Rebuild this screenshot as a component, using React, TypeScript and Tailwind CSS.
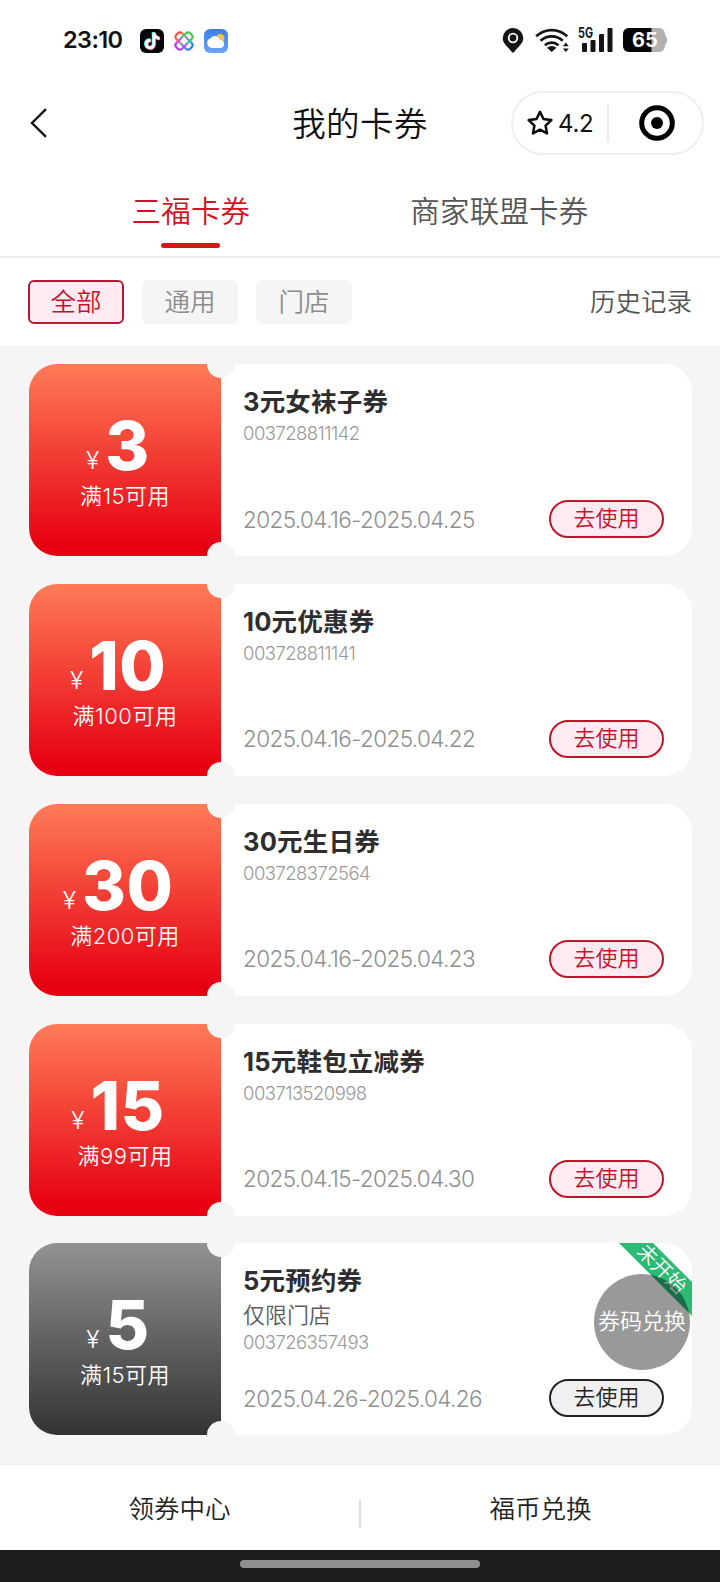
import { useState } from "react";
import clsx from "clsx";

interface Coupon {
  amount: string;
  condition: string;
  title: string;
  scope?: string;
  code: string;
  period: string;
  pending?: boolean;
}

const coupons: Coupon[] = [
  {
    amount: "3",
    condition: "满15可用",
    title: "3元女袜子券",
    code: "003728811142",
    period: "2025.04.16-2025.04.25",
  },
  {
    amount: "10",
    condition: "满100可用",
    title: "10元优惠券",
    code: "003728811141",
    period: "2025.04.16-2025.04.22",
  },
  {
    amount: "30",
    condition: "满200可用",
    title: "30元生日券",
    code: "003728372564",
    period: "2025.04.16-2025.04.23",
  },
  {
    amount: "15",
    condition: "满99可用",
    title: "15元鞋包立减券",
    code: "003713520998",
    period: "2025.04.15-2025.04.30",
  },
  {
    amount: "5",
    condition: "满15可用",
    title: "5元预约券",
    scope: "仅限门店",
    code: "003726357493",
    period: "2025.04.26-2025.04.26",
    pending: true,
  },
];

const tabs = ["三福卡券", "商家联盟卡券"];
const filters = ["全部", "通用", "门店"];

function TikTokIcon() {
  const note =
    "M12.4 3.5h3c.3 2.600 1.700 4 4.100 4.200v3c-1.600 0-2.900-.5-4.100-1.300v5.600a5.400 5.400 0 1 1-4.700-5.300v3.200a2.200 2.200 0 1 0 1.700 2.100z";
  return (
    <svg viewBox="0 0 24 24" className="size-6">
      <rect width="24" height="24" rx="6" fill="#050509" />
      <path d={note} fill="#25e5e0" transform="translate(-0.7 -0.5)" />
      <path d={note} fill="#fb2c55" transform="translate(0.7 0.5)" />
      <path d={note} fill="#fff" />
    </svg>
  );
}

function KnotIcon() {
  return (
    <svg viewBox="0 0 24 24" className="size-6" fill="none" strokeWidth="2.1">
      <defs>
        <linearGradient id="knot" x1="0" y1="0" x2="1" y2="0">
          <stop offset="0" stopColor="#f04a3c" />
          <stop offset="0.3" stopColor="#f5912c" />
          <stop offset="0.65" stopColor="#3f9df0" />
          <stop offset="1" stopColor="#2d7dd0" />
        </linearGradient>
        <linearGradient id="knot2" x1="1" y1="0" x2="0" y2="0">
          <stop offset="0" stopColor="#52c63c" />
          <stop offset="0.4" stopColor="#41c2a0" />
          <stop offset="0.65" stopColor="#e23df0" />
          <stop offset="1" stopColor="#a63df0" />
        </linearGradient>
      </defs>
      <rect width="24" height="24" rx="6" fill="#f8f8fd" />
      <rect x="2.2" y="8" width="19.6" height="8" rx="3" stroke="url(#knot)" transform="rotate(45 12 12)" />
      <rect x="2.2" y="8" width="19.6" height="8" rx="3" stroke="url(#knot2)" transform="rotate(-45 12 12)" />
    </svg>
  );
}

function WeatherIcon() {
  return (
    <svg viewBox="0 0 24 24" className="size-6">
      <defs>
        <linearGradient id="sky" x1="0" y1="0" x2="0" y2="1">
          <stop offset="0" stopColor="#3c7cec" />
          <stop offset="1" stopColor="#6ea4f5" />
        </linearGradient>
      </defs>
      <rect width="24" height="24" rx="6" fill="url(#sky)" />
      <circle cx="16.3" cy="9" r="4" fill="#fdc22e" />
      <path
        d="M8 19a5 5 0 0 1-1.200-9.800A5.200 5.200 0 0 1 16 11a4 4 0 1 1 0 8z"
        fill="#fff"
      />
    </svg>
  );
}

function StatusBar() {
  return (
    <div className="flex h-20 items-center pr-[52px] pl-[63px]">
      <span className="w-[77px] text-[23.5px] leading-6 font-semibold tracking-[-0.6px] text-[#111]">
        23:10
      </span>
      <div className="flex gap-2 pt-0.5">
        <TikTokIcon />
        <KnotIcon />
        <WeatherIcon />
      </div>
      <div className="ml-auto flex items-center text-[#151515]">
        <svg viewBox="0 0 22 26" className="mr-[11px] h-[26px] w-[22px]">
          <path
            d="M11 1A10.300 10.300 0 0 0 .7 11.300C.7 17 6.500 20 9.800 25a1.400 1.400 0 0 0 2.400 0c3.300-5 9.100-8 9.100-13.700A10.300 10.300 0 0 0 11 1z"
            fill="currentColor"
          />
          <circle cx="11" cy="11" r="4.3" fill="none" stroke="#fff" strokeWidth="1.8" />
        </svg>
        <svg
          viewBox="0 0 34 26"
          className="mr-[9px] h-[26px] w-[34px]"
          fill="none"
          stroke="currentColor"
          strokeWidth="2.7"
        >
          <path d="M1.200 9.300a22.500 22.500 0 0 1 31 0" />
          <path d="M5.600 13.800a16.300 16.300 0 0 1 22.200 0" />
          <path d="M9.900 18.200a10.200 10.200 0 0 1 13.600 0" />
          <path d="M12 20.800a7.300 7.300 0 0 1 9.400 0L16.700 25z" fill="currentColor" stroke="none" />
          <path d="M27.800 19.200l3-3.600 3 3.600zM27.800 21.400l3 3.600 3-3.600z" fill="currentColor" stroke="none" />
        </svg>
        <svg viewBox="0 0 36 26" className="mr-[9px] h-[26px] w-9 overflow-visible" fill="currentColor">
          <text x="0" y="11" fontSize="14" fontWeight="700" textLength="15" lengthAdjust="spacingAndGlyphs">
            5G
          </text>
          <rect x="4" y="16" width="5" height="9" rx="1" />
          <rect x="12.5" y="13" width="5" height="12" rx="1" />
          <rect x="21" y="7" width="5" height="18" rx="1" />
          <rect x="29.5" y="1" width="5" height="24" rx="1" />
        </svg>
        <svg viewBox="0 0 45 24" className="h-6 w-[45px]">
          <clipPath id="battery">
            <rect width="42" height="24" rx="6" />
          </clipPath>
          <g clipPath="url(#battery)">
            <rect width="42" height="24" fill="#b0b0b0" />
            <rect width="28.5" height="24" fill="#050505" />
          </g>
          <path d="M42 7q2 1 2 5t-2 5z" fill="#b0b0b0" />
          <text x="22" y="19.2" textAnchor="middle" fontSize="20" fontWeight="700" fill="#fff">
            65
          </text>
        </svg>
      </div>
    </div>
  );
}

function NavBar() {
  return (
    <header className="grid h-[86px] grid-cols-3 items-center">
      <button className="pl-[29px]" aria-label="返回">
        <svg viewBox="0 0 20 32" className="h-8 w-5" fill="none" stroke="#111" strokeWidth="2.4">
          <path d="M17 2.200L3 16l14 13.800" />
        </svg>
      </button>
      <h1 className="pt-0.5 text-center text-[33.5px] leading-10 font-[350] tracking-[0.4px] text-[#111]">
        我的卡券
      </h1>
      <div className="mr-4 mb-px flex h-[64px] w-[193px] items-center justify-self-end rounded-full border-2 border-[#efefef]">
        <div className="flex h-[38px] w-[96px] items-center border-r-2 border-[#ececec] pl-[14px]">
          <svg
            viewBox="0 0 26 26"
            className="mr-[5px] size-[26px]"
            fill="none"
            stroke="#111"
            strokeWidth="2.6"
            strokeLinejoin="round"
          >
            <path d="M13 1.900l3.500 7.100 7.800 1.100-5.700 5.500 1.400 7.800-7-3.700-7 3.700 1.400-7.800-5.700-5.500 7.800-1.100z" />
          </svg>
          <span className="pt-0.5 text-[24px] leading-7 tracking-[-0.3px] text-[#111]">4.2</span>
        </div>
        <svg viewBox="0 0 36 36" className="ml-[30px] size-9">
          <circle cx="18" cy="18" r="15.3" fill="none" stroke="#000" strokeWidth="5" />
          <circle cx="18" cy="18" r="6" />
        </svg>
      </div>
    </header>
  );
}

function CouponCard({ coupon }: { coupon: Coupon }) {
  const { amount, condition, title, scope, code, period, pending } = coupon;

  return (
    <li className="relative flex h-48 overflow-hidden rounded-[28px] bg-white">
      <div
        className={clsx(
          "flex w-48 shrink-0 flex-col items-center bg-linear-to-b/srgb pt-[45px] text-white",
          pending ? "from-[#929292] to-[#333]" : "from-[#ff7b57] to-[#e60012] to-95%",
        )}
      >
        <div className="flex items-baseline gap-[6px] pr-[14px]">
          <span className="relative -top-px text-[24.5px] leading-none font-[350]">¥</span>
          <span className="text-[67px] leading-[73px] font-extrabold tracking-[0.5px]">{amount}</span>
        </div>
        <p className="text-[22px] leading-7 font-[350] tracking-[0.5px]">{condition}</p>
      </div>
      <span className="absolute -top-[14px] left-[178px] size-7 rounded-full bg-[#f5f5f5]" />
      <span className="absolute -bottom-[14px] left-[178px] size-7 rounded-full bg-[#f5f5f5]" />

      <div className="flex flex-1 flex-col pt-5 pr-7 pb-[18px] pl-[22px]">
        <h2 className="mb-px text-[25.5px] leading-[35px] font-bold tracking-[0.2px] text-[#2e2e2e]">{title}</h2>
        {scope && <p className="-mb-px pt-px text-[22px] leading-[30px] font-[350] text-[#5c5c5c]">{scope}</p>}
        <p className="text-[18.5px] leading-[27px] font-light tracking-[-0.55px] text-[#999]">{code}</p>
        <div className="mt-auto flex items-center justify-between">
          <span className="pt-px text-[22.5px] leading-7 font-light tracking-[-0.6px] text-[#8f8f8f]">{period}</span>
          <button
            className={clsx(
              "h-[38px] w-[115px] rounded-full border-2 pb-0.5 text-[22px] leading-8 font-[350]",
              pending ? "border-[#222] bg-[#f0f0f0] text-[#222]" : "border-[#bf1528] bg-[#ffebf1] text-[#c4122a]",
            )}
          >
            去使用
          </button>
        </div>
      </div>

      {pending && (
        <>
          <div className="absolute top-4 -right-[42px] flex h-6 w-[140px] rotate-45 items-center justify-center bg-[#2dba75] pr-1.5 text-[20px] font-[350] text-white">
            未开始
          </div>
          <div className="absolute top-[31px] right-0.5 flex size-24 items-center justify-center rounded-full bg-black/40 pb-0.5 text-[22px] font-[350] whitespace-nowrap text-white">
            券码兑换
          </div>
        </>
      )}
    </li>
  );
}

export default function App() {
  const [tab, setTab] = useState(0);
  const [filter, setFilter] = useState(0);

  return (
    <div className="flex h-[1582px] w-[720px] flex-col overflow-hidden bg-white font-['Inter','Noto_Sans_CJK_SC',sans-serif]">
      <StatusBar />
      <NavBar />

      <nav className="flex h-[92px] justify-between border-b-2 border-[#eee] px-[131.5px] pt-[25px]">
        {tabs.map((name, i) => (
          <button
            key={name}
            onClick={() => setTab(i)}
            className={clsx(
              "flex flex-col items-center text-[29.5px] leading-10 font-[350] tracking-[0.2px]",
              tab === i ? "text-[#cf1322]" : "text-[#555]",
            )}
          >
            {name}
            {tab === i && <span className="mt-[12px] h-[5px] w-[59px] rounded-full bg-[#dc1418]" />}
          </button>
        ))}
      </nav>

      <div className="flex h-[88px] shrink-0 items-center gap-[18px] px-7">
        {filters.map((name, i) => (
          <button
            key={name}
            onClick={() => setFilter(i)}
            className={clsx(
              "h-11 w-24 rounded-md text-[25.5px] leading-10 font-[350]",
              filter === i ? "border-2 border-[#b51a30] bg-[#ffebf1] text-[#c4122a]" : "bg-[#f5f5f5] text-[#8c8c8c]",
            )}
          >
            {name}
          </button>
        ))}
        <a className="ml-auto text-[25.5px] leading-10 font-[350] text-[#555]">历史记录</a>
      </div>

      <main className="flex-1 bg-[#f5f5f5] pt-[18px] pr-7 pl-[29px]">
        <ul className="flex flex-col gap-[27.87px]">
          {coupons.map((coupon) => (
            <CouponCard key={coupon.code} coupon={coupon} />
          ))}
        </ul>
      </main>

      <footer className="flex h-[86px] shrink-0 items-center border-t border-[#eee] pt-1 text-[25.5px] font-[350] text-[#222]">
        <a className="flex-1 text-center">领券中心</a>
        <span className="mt-2 h-7 w-0.5 bg-[#ddd]" />
        <a className="flex-1 text-center">福币兑换</a>
      </footer>
      <div className="flex h-8 shrink-0 justify-center bg-[#1d1d1d] pt-2.5">
        <span className="h-2 w-60 rounded-full bg-[#8f8f8f]" />
      </div>
    </div>
  );
}
